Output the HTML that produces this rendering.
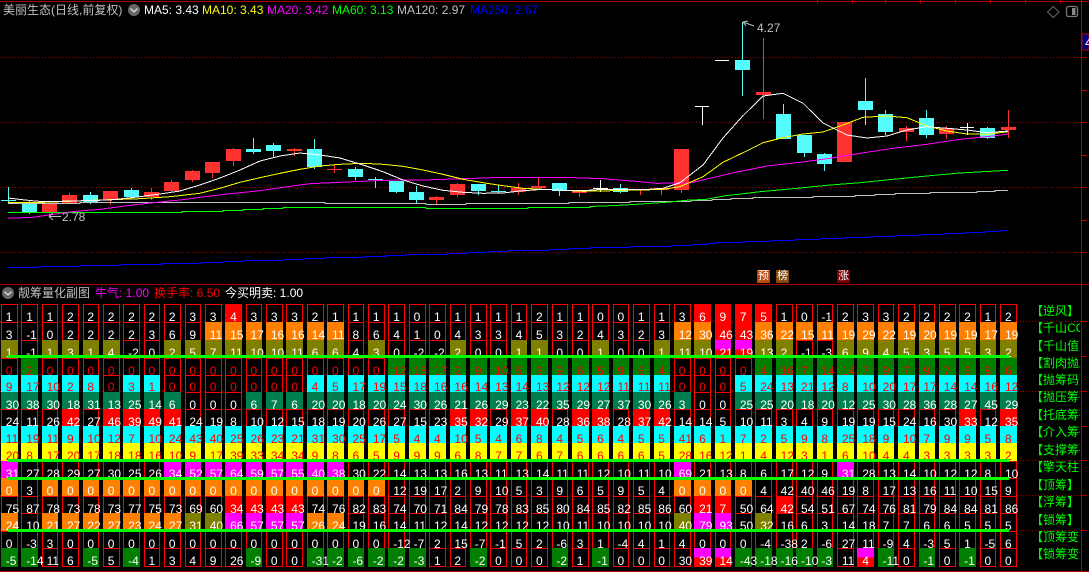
<!DOCTYPE html>
<html><head><meta charset="utf-8"><style>
html,body{margin:0;padding:0;background:#000;width:1089px;height:572px;overflow:hidden}
body{position:relative;font-family:"Liberation Sans","WenQuanYi Zen Hei","Noto Sans CJK SC",sans-serif;font-size:12px;color:#fff}
.t{position:absolute;white-space:nowrap;line-height:16px}
.z{font-size:12px}
svg{position:absolute;left:0;top:0}
.r{position:absolute;left:1px;width:1024px;height:18px;z-index:0;line-height:26px}
.r b{position:relative;float:left;width:15.6px;height:18px;padding-left:4.8px;font-weight:normal;white-space:nowrap}
.r b::before{content:"";position:absolute;left:0;top:0;width:16.7px;height:18.5px;box-sizing:border-box;border:1px solid var(--c,#f00);background:var(--c,#000);z-index:-1}
.d{color:#f00}
.o{--c:#ff8000}.l{--c:#808000}.g{--c:#007f00}.c{--c:#0ff}.e{--c:#008050}.a{--c:#f00}.y{--c:#ff0}.m{--c:#f0f}
.r b.x::before{border:0;background:linear-gradient(#f0f 0,#f0f 50%,#f00 50%,#f00 100%)}
.gl{position:absolute;left:8px;width:1001px;height:3px;background:#0f0;z-index:5}
.lb{position:absolute;left:1031px;width:49px;overflow:hidden;white-space:nowrap;color:#0f0;font-size:12px;line-height:16px;z-index:6}
.s{position:absolute;top:270px;width:13px;height:13px;font-size:11px;line-height:13px;text-align:center;color:#fff}
</style></head><body>
<svg width="1089" height="572" viewBox="0 0 1089 572">
<g stroke="#a00000" stroke-width="1" stroke-dasharray="1 2" shape-rendering="crispEdges">
<path d="M0 57.5H1081M0 122.5H1081M0 187.5H1081M0 252.5H1081M0 321.5H1081M0 391.5H1081M0 460.5H1081M0 495.5H1081M0 530.5H1081"/>
</g>
<g fill="#b00000" shape-rendering="crispEdges">
<rect x="0" y="1" width="1089" height="1"/><rect x="0" y="284" width="1089" height="1"/><rect x="0" y="571" width="1089" height="1"/>
<rect x="1081" y="0" width="1" height="572"/>
<rect x="817" y="0" width="1" height="4"/><rect x="852" y="0" width="1" height="4"/><rect x="885" y="0" width="1" height="4"/><rect x="920" y="0" width="1" height="4"/><rect x="955" y="0" width="1" height="4"/><rect x="990" y="0" width="1" height="4"/><rect x="1025" y="0" width="1" height="4"/><rect x="1060" y="0" width="1" height="4"/>
<rect x="1082" y="57" width="5" height="1"/><rect x="1082" y="90" width="5" height="1"/><rect x="1082" y="122" width="5" height="1"/><rect x="1082" y="155" width="5" height="1"/><rect x="1082" y="187" width="5" height="1"/><rect x="1082" y="220" width="5" height="1"/><rect x="1082" y="252" width="5" height="1"/>
<rect x="1082" y="321" width="5" height="1"/><rect x="1082" y="356" width="5" height="1"/><rect x="1082" y="391" width="5" height="1"/><rect x="1082" y="426" width="5" height="1"/><rect x="1082" y="460" width="5" height="1"/><rect x="1082" y="495" width="5" height="1"/><rect x="1082" y="530" width="5" height="1"/>
</g>
<rect x="1082" y="34" width="7" height="16" fill="#000080" stroke="#b00000" shape-rendering="crispEdges"/>
<text x="1085" y="47" fill="#fff" font-size="13" font-family="Liberation Sans">4</text>
<path d="M1053.3 6.5L1059 12 1053.3 17.5 1047.5 12Z" fill="none" stroke="#666" stroke-width="1"/>
<rect x="1066.5" y="6.5" width="11" height="10" rx="2" fill="none" stroke="#777" stroke-width="1.3"/><rect x="1072" y="8" width="3.5" height="7" fill="#888"/>
<circle cx="134" cy="10" r="6" fill="#666"/><path d="M130.5 8.5L134 12 137.5 8.5" fill="none" stroke="#ddd" stroke-width="1.3"/>
<circle cx="8" cy="293" r="6" fill="#666"/><path d="M4.5 291.5L8 295 11.500 291.500" fill="none" stroke="#ddd" stroke-width="1.300"/>

<!-- candles -->
<g shape-rendering="crispEdges">
<g fill="#54fcfc">
<rect x="8" y="187" width="1" height="16"/><rect x="1" y="200" width="15" height="1"/>
<rect x="29" y="201" width="1" height="13"/><rect x="22" y="203" width="15" height="9"/>
<rect x="90" y="192" width="1" height="12"/><rect x="83" y="195" width="15" height="7"/>
<rect x="131" y="188" width="1" height="11"/><rect x="124" y="190" width="15" height="7"/>
<rect x="253" y="138" width="1" height="16"/><rect x="246" y="149" width="15" height="3"/>
<rect x="273" y="143" width="1" height="14"/><rect x="266" y="145" width="15" height="6"/>
<rect x="314" y="139" width="1" height="30"/><rect x="307" y="149" width="15" height="18"/>
<rect x="355" y="167" width="1" height="13"/><rect x="348" y="169" width="15" height="8"/>
<rect x="375" y="177" width="1" height="11"/><rect x="368" y="179" width="15" height="1"/>
<rect x="396" y="181" width="1" height="12"/><rect x="389" y="181" width="15" height="11"/>
<rect x="416" y="186" width="1" height="17"/><rect x="409" y="192" width="15" height="8"/>
<rect x="478" y="184" width="1" height="11"/><rect x="471" y="184" width="15" height="7"/>
<rect x="498" y="185" width="1" height="8"/><rect x="491" y="191" width="15" height="1"/>
<rect x="559" y="183" width="1" height="13"/><rect x="552" y="183" width="15" height="8"/>
<rect x="620" y="184" width="1" height="9"/><rect x="613" y="188" width="15" height="4"/>
<rect x="742" y="22" width="1" height="74"/><rect x="735" y="60" width="15" height="10"/>
<rect x="783" y="104" width="1" height="35"/><rect x="776" y="114" width="15" height="25"/>
<rect x="804" y="135" width="1" height="22"/><rect x="797" y="135" width="15" height="18"/>
<rect x="824" y="153" width="1" height="18"/><rect x="817" y="154" width="15" height="10"/>
<rect x="865" y="78" width="1" height="47"/><rect x="858" y="101" width="15" height="9"/>
<rect x="885" y="110" width="1" height="25"/><rect x="878" y="114" width="15" height="18"/>
<rect x="926" y="110" width="1" height="28"/><rect x="919" y="118" width="15" height="17"/>
<rect x="987" y="127" width="1" height="12"/><rect x="980" y="128" width="15" height="10"/>
</g>
<g fill="#ff3232">
<rect x="49" y="201" width="1" height="16"/><rect x="42" y="203" width="15" height="9"/>
<rect x="69" y="193" width="1" height="10"/><rect x="62" y="195" width="15" height="8"/>
<rect x="110" y="191" width="1" height="14"/><rect x="103" y="191" width="15" height="9"/>
<rect x="151" y="188" width="1" height="12"/><rect x="144" y="192" width="15" height="5"/>
<rect x="171" y="180" width="1" height="12"/><rect x="164" y="182" width="15" height="9"/>
<rect x="192" y="170" width="1" height="12"/><rect x="185" y="171" width="15" height="9"/>
<rect x="212" y="162" width="1" height="16"/><rect x="205" y="162" width="15" height="11"/>
<rect x="233" y="148" width="1" height="18"/><rect x="226" y="149" width="15" height="12"/>
<rect x="294" y="148" width="1" height="8"/><rect x="287" y="149" width="15" height="2"/>
<rect x="334" y="165" width="1" height="8"/><rect x="327" y="169" width="15" height="1"/>
<rect x="436" y="196" width="1" height="8"/><rect x="429" y="197" width="15" height="3"/>
<rect x="457" y="183" width="1" height="14"/><rect x="450" y="184" width="15" height="11"/>
<rect x="518" y="183" width="1" height="12"/><rect x="511" y="188" width="15" height="4"/>
<rect x="538" y="177" width="1" height="11"/><rect x="531" y="186" width="15" height="2"/>
<rect x="579" y="191" width="1" height="6"/><rect x="572" y="191" width="15" height="2"/>
<rect x="640" y="189" width="1" height="6"/><rect x="633" y="189" width="15" height="1"/>
<rect x="661" y="188" width="1" height="7"/><rect x="654" y="188" width="15" height="2"/>
<rect x="681" y="149" width="1" height="44"/><rect x="674" y="149" width="15" height="41"/>
<rect x="763" y="38" width="1" height="81"/><rect x="756" y="92" width="15" height="3"/>
<rect x="844" y="122" width="1" height="40"/><rect x="837" y="122" width="15" height="40"/>
<rect x="906" y="126" width="1" height="15"/><rect x="899" y="128" width="15" height="4"/>
<rect x="946" y="126" width="1" height="13"/><rect x="939" y="128" width="15" height="6"/>
<rect x="1008" y="110" width="1" height="28"/><rect x="1001" y="127" width="15" height="3"/>
</g>
<g fill="#fff">
<rect x="600" y="180" width="1" height="12"/><rect x="593" y="188" width="15" height="1"/>
<rect x="702" y="106" width="1" height="19"/><rect x="695" y="106" width="14" height="1"/>
<rect x="715" y="60" width="14" height="1"/>
<rect x="967" y="123" width="1" height="12"/><rect x="960" y="127" width="14" height="1"/>
</g>
</g>
<!-- MAs -->
<g fill="none" stroke-width="1" shape-rendering="crispEdges">
<polyline stroke="#00f" points="8,267.500 39,267.500 39,266.500 80,266.500 80,265.500 121,265.500 121,264.500 162,264.500 162,263.500 202,263.500 202,262.500 223,262.500 223,261.500 243,261.500 243,260.500 284,260.500 284,259.500 304,259.500 304,258.500 325,258.500 325,257.500 365,257.500 365,256.500 386,256.500 386,255.500 406,255.500 406,254.500 447,254.500 447,253.500 466,253.500 466,252.500 488,252.500 488,251.500 508,251.500 508,250.500 549,250.500 549,249.500 569,249.500 569,248.500 590,248.500 590,247.500 630,247.500 630,246.500 671,246.500 671,245.500 692,245.500 692,244.500 707,244.500 707,243.500 717,243.500 717,242.500 745,242.500 745,241.500 770,241.500 770,240.500 795,240.500 795,239.500 820,239.500 820,238.500 845,238.500 845,237.500 870,237.500 870,236.500 895,236.500 895,235.500 920,235.500 920,234.500 945,234.500 945,233.500 965,233.500 965,232.500 985,232.500 985,231.500 1000,231.500 1000,230.500 1008,230.500"/>
<polyline stroke="#c0c0c0" points="8,203.500 80,203.500 80,202.500 325,202.500 325,203.500 426,203.500 426,204.500 466,204.500 466,203.500 569,203.500 569,202.500 630,202.500 630,201.500 691,201.500 691,200.500 712,200.500 712,199.500 731,199.500 731,198.500 753,198.500 753,197.500 813,197.500 813,196.500 855,196.500 855,195.500 875,195.500 875,194.500 895,194.500 895,193.500 930,193.500 930,192.500 977,192.500 977,191.500 995,191.500 995,190.500 1008,190.500"/>
<polyline stroke="#0f0" points="8,212.500 182,212.500 182,211.500 223,211.500 223,210.500 243,210.500 243,209.500 263,209.500 263,208.500 283,208.500 283,207.500 426,207.500 426,208.500 528,208.500 528,207.500 590,207.500 590,206.500 610,205.700 630,204.700 651,203.300 666,202.300 686,200.300 706,199.300 726,195.700 760,191.700 793,188.700 827,185.300 860,182.700 893,179.300 927,176 960,173 1008,170.300"/>
<polyline stroke="#f0f" points="8,218.300 33,217.300 53,214.300 75,211.300 100,209.300 127,205.700 153,202.700 180,200 200,197.300 230,193.700 260,190.700 280,187.700 310,183.700 340,182.300 363,181.300 383,180.300 423,180 463,178.700 503,177.300 563,177.300 603,178.700 636,181.300 656,183.300 690,183 710,178.300 737,172 767,166 800,162.300 830,158.300 860,153.300 893,148.300 927,144.300 960,139.300 993,136 1008,134"/>
<polyline stroke="#ff0" points="8,202.300 33,202.700 60,201.700 100,200 140,198.700 170,196.700 200,193.300 220,188.300 240,182.300 260,177.700 280,173.300 300,169.300 320,166 340,164.300 363,163.300 383,164.300 403,166.300 423,170 443,174.300 463,179.300 483,182.700 503,185.700 523,188.300 543,189.300 563,190.300 583,191.300 603,191 623,190.300 643,190 663,189.300 680,186.700 703,176.700 723,162.300 743,152.700 763,142.700 783,137.700 803,134 823,132 843,125 863,117.300 887,116 907,117.700 927,126 947,131 967,134 987,134.300 1008,131.700"/>
<polyline stroke="#fff" points="8,198 25,200 35,201 45,201.700 110,200 140,196.700 160,194 180,191 200,185 220,178 240,170 260,161 280,156 300,153 320,155 340,158 363,165 383,171.700 403,180 423,186 443,190.300 463,192.300 483,193.300 503,193 523,190.700 543,189.300 563,190.300 583,190.700 603,189.300 623,189.700 643,189.700 663,188.300 680,182.700 703,165 723,138 742,116.700 763,96 783,93.300 803,103.300 823,123 847,135 867,138 887,136 907,130 927,126.700 947,128.300 967,130 987,132.700 1008,131"/>
</g>
<path d="M49 216.500H61M49 216.500L53 213M49 216.500L53 220" fill="none" stroke="#c0c0c0" stroke-width="1"/>
<path d="M743 22L754 26M743 22L748 21M743 22L746 26" fill="none" stroke="#c0c0c0" stroke-width="1"/>
</svg>

<div class="t z" style="left:3px;top:2px;color:#c0c0c0">美丽生态(日线,前复权)</div>
<div class="t" style="left:144px;top:2px;color:#fff">MA5: 3.43</div>
<div class="t" style="left:202px;top:2px;color:#ff0">MA10: 3.43</div>
<div class="t" style="left:267px;top:2px;color:#f0f">MA20: 3.42</div>
<div class="t" style="left:332px;top:2px;color:#0f0">MA60: 3.13</div>
<div class="t" style="left:397px;top:2px;color:#c0c0c0">MA120: 2.97</div>
<div class="t" style="left:470px;top:2px;color:#00f">MA250: 2.67</div>
<div class="t" style="left:62px;top:209px;color:#c0c0c0">2.78</div>
<div class="t" style="left:757px;top:20px;color:#c0c0c0">4.27</div>
<div class="s" style="left:757px;background:#b84a10">预</div>
<div class="s" style="left:776px;background:#7f4a10">榜</div>
<div class="s" style="left:837px;background:#7a0000">涨</div>
<div class="t z" style="left:18px;top:285px;color:#c0c0c0">靓筹量化副图</div>
<div class="t" style="left:95px;top:285px;color:#f0f"><span class="z">牛气</span>: 1.00</div>
<div class="t" style="left:154px;top:285px;color:#f00"><span class="z">换手率</span>: 6.50</div>
<div class="t" style="left:225px;top:285px;color:#fff"><span class="z">今买明卖</span>: 1.00</div>

<div class="r" style="top:304px"><b>1</b><b>1</b><b>1</b><b>2</b><b>2</b><b>2</b><b>2</b><b>2</b><b>2</b><b>3</b><b>3</b><b class=a>4</b><b>3</b><b>3</b><b>3</b><b>2</b><b>1</b><b>1</b><b>1</b><b>1</b><b>0</b><b>1</b><b>1</b><b>1</b><b>1</b><b>1</b><b>2</b><b>1</b><b>1</b><b>0</b><b>0</b><b>1</b><b>1</b><b>3</b><b class=a>6</b><b class=a>9</b><b class=a>7</b><b class=a>5</b><b>1</b><b>0</b><b>-1</b><b>2</b><b>3</b><b>3</b><b>2</b><b>2</b><b>2</b><b>2</b><b>1</b><b>2</b></div>
<div class="r" style="top:322px"><b>3</b><b>-1</b><b>0</b><b>2</b><b>2</b><b>2</b><b>2</b><b>3</b><b>6</b><b>9</b><b class=o>11</b><b class=o>15</b><b class=o>17</b><b class=o>16</b><b class=o>16</b><b class=o>14</b><b class=o>11</b><b>8</b><b>6</b><b>4</b><b>1</b><b>0</b><b>4</b><b>3</b><b>3</b><b>4</b><b>5</b><b>3</b><b>2</b><b>4</b><b>3</b><b>2</b><b>3</b><b class=o>12</b><b class=o>30</b><b class=a>46</b><b class=a>43</b><b class=o>36</b><b class=o>22</b><b class=o>15</b><b class=o>11</b><b class=o>19</b><b class=o>29</b><b class=o>22</b><b class=o>19</b><b class=o>20</b><b class=o>19</b><b class=o>19</b><b class=o>17</b><b class=o>19</b></div>
<div class="r" style="top:340px"><b class=l>1</b><b>-1</b><b class=l>1</b><b class=l>3</b><b class=l>1</b><b class=l>4</b><b>-2</b><b>0</b><b class=l>2</b><b class=l>5</b><b class=l>7</b><b class=l>11</b><b class=l>10</b><b class=l>10</b><b class=l>11</b><b class=l>6</b><b class=l>6</b><b>4</b><b class=l>3</b><b>0</b><b>-2</b><b>-2</b><b class=l>2</b><b>0</b><b>0</b><b class=l>1</b><b class=l>1</b><b>0</b><b>0</b><b class=l>1</b><b>0</b><b>0</b><b class=l>1</b><b class=l>11</b><b class=l>10</b><b class=x>21</b><b class=x>19</b><b class=l>13</b><b class=l>2</b><b>-1</b><b>-3</b><b class=l>6</b><b class=l>9</b><b class=l>4</b><b class=l>5</b><b class=l>3</b><b class=l>5</b><b class=l>5</b><b class=l>3</b><b class=l>2</b></div>
<div class="r d" style="top:358px"><b>0</b><b class=g>2</b><b>0</b><b>0</b><b>0</b><b>0</b><b>0</b><b>0</b><b>0</b><b>0</b><b>0</b><b>0</b><b>0</b><b>0</b><b>0</b><b>0</b><b>0</b><b>0</b><b>0</b><b class=g>12</b><b class=g>18</b><b class=g>17</b><b class=g>2</b><b class=g>9</b><b class=g>10</b><b class=g>5</b><b class=g>3</b><b class=g>9</b><b class=g>6</b><b class=g>5</b><b class=g>9</b><b class=g>5</b><b class=g>4</b><b>0</b><b>0</b><b>0</b><b>0</b><b class=g>4</b><b class=g>16</b><b class=g>7</b><b class=g>14</b><b class=g>14</b><b class=g>7</b><b class=g>9</b><b class=g>7</b><b class=g>9</b><b class=g>7</b><b class=g>6</b><b class=g>8</b><b class=g>6</b></div>
<div class="r d" style="top:375px;line-height:24px"><b class=c>9</b><b class=c>17</b><b class=c>10</b><b class=c>2</b><b class=c>8</b><b>0</b><b class=c>3</b><b class=c>1</b><b>0</b><b>0</b><b>0</b><b>0</b><b>0</b><b>0</b><b>0</b><b class=c>4</b><b class=c>5</b><b class=c>17</b><b class=c>19</b><b class=c>15</b><b class=c>18</b><b class=c>16</b><b class=c>16</b><b class=c>14</b><b class=c>13</b><b class=c>14</b><b class=c>13</b><b class=c>12</b><b class=c>12</b><b class=c>12</b><b class=c>11</b><b class=c>11</b><b class=c>11</b><b>0</b><b>0</b><b>0</b><b class=c>5</b><b class=c>24</b><b class=c>13</b><b class=c>21</b><b class=c>12</b><b class=c>8</b><b class=c>10</b><b class=c>20</b><b class=c>17</b><b class=c>17</b><b class=c>14</b><b class=c>14</b><b class=c>16</b><b class=c>12</b></div>
<div class="r" style="top:392px"><b class=e>30</b><b class=e>38</b><b class=e>30</b><b class=e>18</b><b class=e>31</b><b class=e>13</b><b class=e>25</b><b class=e>14</b><b class=e>6</b><b>0</b><b>0</b><b>0</b><b class=e>6</b><b class=e>7</b><b class=e>6</b><b class=e>20</b><b class=e>20</b><b class=e>18</b><b class=e>20</b><b class=e>24</b><b class=e>30</b><b class=e>26</b><b class=e>21</b><b class=e>26</b><b class=e>29</b><b class=e>23</b><b class=e>22</b><b class=e>35</b><b class=e>29</b><b class=e>27</b><b class=e>37</b><b class=e>30</b><b class=e>26</b><b class=e>3</b><b>0</b><b>0</b><b class=e>25</b><b class=e>25</b><b class=e>20</b><b class=e>18</b><b class=e>20</b><b class=e>12</b><b class=e>25</b><b class=e>30</b><b class=e>28</b><b class=e>36</b><b class=e>28</b><b class=e>27</b><b class=e>45</b><b class=e>29</b></div>
<div class="r" style="top:409px"><b>24</b><b>11</b><b>26</b><b class=a>42</b><b>27</b><b class=a>46</b><b class=a>39</b><b class=a>49</b><b class=a>41</b><b>24</b><b>19</b><b>8</b><b>10</b><b>12</b><b>15</b><b>18</b><b>19</b><b>20</b><b>26</b><b>27</b><b>15</b><b>23</b><b class=a>35</b><b class=a>32</b><b>29</b><b class=a>37</b><b class=a>40</b><b>28</b><b class=a>36</b><b class=a>38</b><b>28</b><b class=a>37</b><b class=a>42</b><b>14</b><b>14</b><b>5</b><b>10</b><b>11</b><b>3</b><b>4</b><b>9</b><b>19</b><b>19</b><b>15</b><b>24</b><b>16</b><b>30</b><b class=a>33</b><b>12</b><b class=a>35</b></div>
<div class="r d" style="top:426px"><b class=c>11</b><b class=c>19</b><b class=c>11</b><b class=c>9</b><b class=c>10</b><b class=c>12</b><b class=c>7</b><b class=c>10</b><b class=c>24</b><b class=c>43</b><b class=c>40</b><b class=c>25</b><b class=c>26</b><b class=c>23</b><b class=c>21</b><b class=c>31</b><b class=c>30</b><b class=c>25</b><b class=c>17</b><b class=c>5</b><b class=c>4</b><b class=c>4</b><b class=c>10</b><b class=c>5</b><b class=c>4</b><b class=c>6</b><b class=c>8</b><b class=c>4</b><b class=c>5</b><b class=c>6</b><b class=c>4</b><b class=c>5</b><b class=c>5</b><b class=c>41</b><b class=c>6</b><b class=c>1</b><b class=c>7</b><b class=c>2</b><b class=c>5</b><b class=c>9</b><b class=c>8</b><b class=c>25</b><b class=c>18</b><b class=c>9</b><b class=c>10</b><b class=c>7</b><b class=c>9</b><b class=c>9</b><b class=c>5</b><b class=c>8</b></div>
<div class="r d" style="top:443px"><b class=y>20</b><b class=y>8</b><b class=y>17</b><b class=y>20</b><b class=y>17</b><b class=y>18</b><b class=y>18</b><b class=y>16</b><b class=y>10</b><b class=y>9</b><b class=y>17</b><b class=y>39</b><b class=y>33</b><b class=y>34</b><b class=y>34</b><b class=y>9</b><b class=y>8</b><b class=y>6</b><b class=y>5</b><b class=y>9</b><b class=y>9</b><b class=y>9</b><b class=y>6</b><b class=y>8</b><b class=y>7</b><b class=y>7</b><b class=y>6</b><b class=y>7</b><b class=y>6</b><b class=y>6</b><b class=y>6</b><b class=y>6</b><b class=y>5</b><b class=y>28</b><b class=y>16</b><b class=y>12</b><b class=y>1</b><b class=y>4</b><b class=y>12</b><b class=y>3</b><b class=y>1</b><b class=y>6</b><b class=y>10</b><b class=y>4</b><b class=y>4</b><b class=y>3</b><b class=y>3</b><b class=y>3</b><b class=y>3</b><b class=y>2</b></div>
<div class="r" style="top:461px"><b class=m>31</b><b>27</b><b>28</b><b>29</b><b>27</b><b>30</b><b>25</b><b>26</b><b class=m>34</b><b class=m>52</b><b class=m>57</b><b class=m>64</b><b class=m>59</b><b class=m>57</b><b class=m>55</b><b class=m>40</b><b class=m>38</b><b>30</b><b>22</b><b>14</b><b>13</b><b>13</b><b>16</b><b>13</b><b>11</b><b>13</b><b>14</b><b>11</b><b>11</b><b>12</b><b>10</b><b>11</b><b>10</b><b class=m>69</b><b>21</b><b>13</b><b>8</b><b>6</b><b>17</b><b>12</b><b>9</b><b class=m>31</b><b>28</b><b>13</b><b>14</b><b>10</b><b>12</b><b>12</b><b>8</b><b>10</b></div>
<div class="r" style="top:478px"><b class=o>0</b><b>3</b><b class=o>0</b><b class=o>0</b><b class=o>0</b><b class=o>0</b><b class=o>0</b><b class=o>0</b><b class=o>0</b><b class=o>0</b><b class=o>0</b><b class=o>0</b><b class=o>0</b><b class=o>0</b><b class=o>0</b><b class=o>0</b><b class=o>0</b><b class=o>0</b><b class=o>0</b><b>12</b><b>19</b><b>17</b><b>2</b><b>9</b><b>10</b><b>5</b><b>3</b><b>9</b><b>6</b><b>5</b><b>9</b><b>5</b><b>4</b><b class=o>0</b><b class=o>0</b><b class=o>0</b><b class=o>0</b><b>4</b><b>42</b><b>40</b><b>46</b><b>19</b><b>8</b><b>17</b><b>13</b><b>16</b><b>11</b><b>10</b><b>15</b><b>9</b></div>
<div class="r" style="top:496px"><b>75</b><b>87</b><b>78</b><b>73</b><b>78</b><b>73</b><b>77</b><b>75</b><b>73</b><b>69</b><b>60</b><b class=a>34</b><b class=a>43</b><b class=a>43</b><b class=a>43</b><b>74</b><b>76</b><b>82</b><b>83</b><b>74</b><b>70</b><b>71</b><b>84</b><b>79</b><b>78</b><b>83</b><b>85</b><b>80</b><b>84</b><b>85</b><b>82</b><b>85</b><b>86</b><b>60</b><b class=a>21</b><b class=a>7</b><b>50</b><b>64</b><b class=a>42</b><b>54</b><b>51</b><b>67</b><b>74</b><b>76</b><b>81</b><b>79</b><b>84</b><b>84</b><b>81</b><b>86</b></div>
<div class="r" style="top:513px"><b class=o>24</b><b>10</b><b class=o>21</b><b class=o>27</b><b class=o>22</b><b class=o>27</b><b class=o>23</b><b class=o>24</b><b class=o>27</b><b class=l>31</b><b class=l>40</b><b class=m>66</b><b class=m>57</b><b class=m>57</b><b class=m>57</b><b class=o>26</b><b class=o>24</b><b>19</b><b>16</b><b>14</b><b>11</b><b>12</b><b>14</b><b>12</b><b>12</b><b>12</b><b>12</b><b>10</b><b>11</b><b>10</b><b>10</b><b>10</b><b>10</b><b class=l>40</b><b class=m>79</b><b class=m>93</b><b>50</b><b class=l>32</b><b>16</b><b>6</b><b>3</b><b>14</b><b>18</b><b>7</b><b>7</b><b>6</b><b>6</b><b>5</b><b>5</b><b>5</b></div>
<div class="r" style="top:531px"><b>0</b><b>-3</b><b>3</b><b>0</b><b>0</b><b>0</b><b>0</b><b>0</b><b>0</b><b>0</b><b>0</b><b>0</b><b>0</b><b>0</b><b>0</b><b>0</b><b>0</b><b>0</b><b>0</b><b>-12</b><b>-7</b><b>2</b><b>15</b><b>-7</b><b>-1</b><b>5</b><b>2</b><b>-6</b><b>3</b><b>1</b><b>-4</b><b>4</b><b>1</b><b>4</b><b>0</b><b>0</b><b>0</b><b>-4</b><b>-38</b><b>2</b><b>-6</b><b>27</b><b>11</b><b>-9</b><b>4</b><b>-3</b><b>5</b><b>1</b><b>-5</b><b>6</b></div>
<div class="r" style="top:548px"><b class=g>-5</b><b class=g>-14</b><b>11</b><b>6</b><b class=g>-5</b><b>5</b><b class=g>-4</b><b>1</b><b>3</b><b>4</b><b>9</b><b>26</b><b class=g>-9</b><b>0</b><b>0</b><b class=g>-31</b><b class=g>-2</b><b class=g>-6</b><b class=g>-2</b><b class=g>-2</b><b class=g>-3</b><b>1</b><b>2</b><b class=g>-2</b><b>0</b><b>0</b><b>0</b><b class=g>-2</b><b>1</b><b class=g>-1</b><b>0</b><b>0</b><b>0</b><b>30</b><b class=x>39</b><b class=x>14</b><b class=g>-43</b><b class=g>-18</b><b class=g>-16</b><b class=g>-10</b><b class=g>-3</b><b>11</b><b class=x>4</b><b class=g>-11</b><b>0</b><b class=g>-1</b><b>0</b><b class=g>-1</b><b>0</b><b>0</b></div>

<div class="gl" style="top:355px"></div>
<div class="gl" style="top:459px"></div>
<div class="gl" style="top:477px"></div>
<div class="gl" style="top:529px"></div>

<div class="lb" style="top:303px">【逆风】</div>
<div class="lb" style="top:320px">【千山COST】</div>
<div class="lb" style="top:338px">【千山值】</div>
<div class="lb" style="top:355px">【割肉抛压】</div>
<div class="lb" style="top:372px">【抛筹码】</div>
<div class="lb" style="top:389px">【抛压筹码】</div>
<div class="lb" style="top:407px">【托底筹码】</div>
<div class="lb" style="top:424px">【介入筹码】</div>
<div class="lb" style="top:442px">【支撑筹码】</div>
<div class="lb" style="top:459px">【擎天柱】</div>
<div class="lb" style="top:477px">【顶筹】</div>
<div class="lb" style="top:494px">【浮筹】</div>
<div class="lb" style="top:512px">【锁筹】</div>
<div class="lb" style="top:529px">【顶筹变化】</div>
<div class="lb" style="top:546px">【锁筹变化】</div>
</body></html>
